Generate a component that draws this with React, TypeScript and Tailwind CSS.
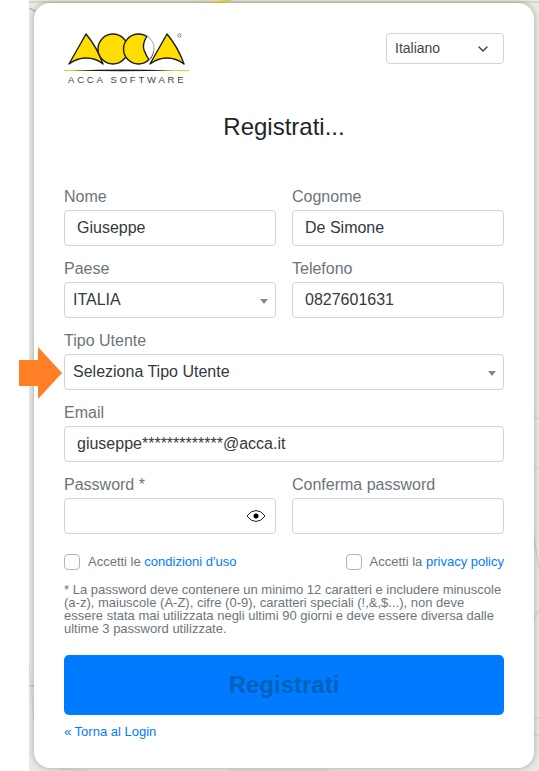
import type { ReactNode } from 'react'
import { ChevronDown } from 'lucide-react'

const inputCls =
  'h-9 w-full rounded-[4px] border border-[#ced4da] bg-white px-3 text-[16px] leading-[34px] text-[#333a40]'
const labelCls = 'mb-1 h-5 text-[16px] leading-[22px] text-[#6c757d]'

function Field({ label, value, className }: { label: string; value?: string; className?: string }) {
  return (
    <div className={className}>
      <div className={labelCls}>{label}</div>
      <div className={inputCls}>{value}</div>
    </div>
  )
}

function SelectField({ label, value }: { label: string; value: string }) {
  return (
    <div>
      <div className={labelCls}>{label}</div>
      <div className="flex h-9 w-full items-center justify-between rounded-[4px] border border-[#ced4da] bg-white pl-2 pr-[7px] text-[16px] text-[#333a40]">
        <span>{value}</span>
        <span className="mt-[2px] h-0 w-0 border-x-[4px] border-t-[5px] border-x-transparent border-t-[#888]" />
      </div>
    </div>
  )
}

function Logo() {
  return (
    <div className="flex w-[126px] flex-col">
      <svg width="126" height="42" viewBox="0 0 126 42" className="block">
        <g fill="#ffdd00" stroke="#1d1a12" strokeWidth="1.4" strokeLinejoin="round">
          <path d="M22 1 L5 31 Q13 25 22 25 Q32 25 39 31 Q33 14 22 1 Z" />
          <path d="M103 1 L86 31 Q94 25 103 25 Q112 25 120 31 Q114 14 103 1 Z" />
          <circle cx="49" cy="16" r="15" />
          <circle cx="74.5" cy="16" r="15" />
        </g>
        <path d="M83 3 Q78 11 80 17 Q82 22 85 27 Q90 21 90 15 Q90 8 83 3 Z" fill="#fff" />
        <path d="M83 3 Q78 11 80 17 Q82 22 85 27" fill="none" stroke="#1d1a12" strokeWidth="1.4" />
        <path d="M83 3 Q90 8 90 15 Q90 21 85 27" fill="none" stroke="#999" strokeWidth="0.7" />
        <circle cx="115.5" cy="2.5" r="1.6" fill="none" stroke="#777" strokeWidth="0.9" />
        <rect x="0" y="37" width="125" height="1" fill="#e6cc20" />
        <path d="M8 37.5 Q58 35.5 109 37.5 Q58 39 8 37.5 Z" fill="#1a1a1a" />
      </svg>
      <div className="mt-[-1px] whitespace-nowrap pl-[4px] text-[9.5px] leading-[12px] tracking-[2.8px] text-[#444]">
        ACCA SOFTWARE
      </div>
    </div>
  )
}

function Check({ children }: { children: ReactNode }) {
  return (
    <div className="flex items-center gap-2 text-[13px] text-[#6c757d]">
      <span className="h-4 w-4 rounded-[4px] border border-[#adb5bd] bg-white" />
      <span>{children}</span>
    </div>
  )
}

// faint map roads showing behind the card
function MapLines() {
  return (
    <svg width="510" height="771" viewBox="0 0 510 771" fill="none" className="absolute left-[29px] top-0">
      <path d="M0 2 H510" stroke="#d8d6c4" strokeWidth="2" />
      <path d="M165 4 Q190 3 202 0" stroke="#ecd84a" strokeWidth="2" />
      <path d="M0 8 L6 11" stroke="#999" strokeWidth="1" />
      <path d="M0 686 H5" stroke="#bbb" strokeWidth="1" />
      <path d="M0 665 L5 720" stroke="#dcdccb" strokeWidth="1" />
      <path d="M504 415 L510 420 M504 465 L510 470 M504 530 L510 570 M504 620 L510 610 M504 718 H510 M504 735 H510" stroke="#cfcfc4" strokeWidth="1" />
      <path d="M30 769 L60 771 M200 770 H300" stroke="#d6d6ca" strokeWidth="1" />
    </svg>
  )
}

export default function App() {
  return (
    <div className="relative h-[771px] w-[539px] overflow-hidden bg-white font-['Liberation_Sans',Arial,sans-serif]">
      <div className="ml-[29px] h-full bg-[#e9e9e4] pl-[5px] pt-[3px]">
        <MapLines />
        <div className="relative h-[765px] w-[500px] rounded-[16px] bg-white px-[30px] pt-[30px] shadow-[0_0_6px_rgba(0,0,0,0.3)]">
          <div className="flex items-start justify-between">
            <Logo />
            <div className="flex h-[31px] w-[118px] items-center justify-between rounded-[4px] border border-[#ced4da] pl-2 pr-[12px] text-[14px] text-[#3f474e]">
              <span>Italiano</span>
              <ChevronDown size={16} strokeWidth={2} className="text-[#343a40]" />
            </div>
          </div>
          <h1 className="mt-[23px] text-center text-[24px] leading-[36px] text-[#212529]">Registrati...</h1>

          <div className="mt-[41px] flex flex-col gap-3">
            <div className="grid grid-cols-2 gap-4">
              <Field label="Nome" value="Giuseppe" />
              <Field label="Cognome" value="De Simone" />
            </div>
            <div className="grid grid-cols-2 gap-4">
              <SelectField label="Paese" value="ITALIA" />
              <Field label="Telefono" value="0827601631" />
            </div>
            <SelectField label="Tipo Utente" value="Seleziona Tipo Utente" />
            <Field label="Email" value="giuseppe*************@acca.it" />
            <div className="grid grid-cols-2 gap-4">
              <div>
                <div className={labelCls}>Password *</div>
                <div className={inputCls + ' flex items-center justify-end pr-[9px]'}>
                  <svg width="20" height="14" viewBox="0 0 20 14" fill="none">
                    <path d="M1 7 Q5 1.5 10 1.5 Q15 1.5 19 7 Q15 12.5 10 12.5 Q5 12.5 1 7 Z" stroke="#222" strokeWidth="1" />
                    <circle cx="10" cy="7" r="2.5" fill="#000" />
                  </svg>
                </div>
              </div>
              <Field label="Conferma password" />
            </div>
          </div>

          <div className="mt-[18px] flex items-center justify-between">
            <Check>
              Accetti le <span className="text-[#007bff]">condizioni d'uso</span>
            </Check>
            <Check>
              Accetti la <span className="text-[#007bff]">privacy policy</span>
            </Check>
          </div>

          <p className="mt-[11px] text-[13px] leading-[13px] text-[#6c757d]">
            * La password deve contenere un minimo 12 caratteri e includere minuscole (a-z), maiuscole (A-Z), cifre (0-9), caratteri speciali (!,&,$...), non deve essere stata mai utilizzata negli ultimi 90 giorni e deve essere diversa dalle ultime 3 password utilizzate.
          </p>

          <div className="mt-[20px] flex h-[60px] items-center justify-center rounded-[5px] bg-[#007bff] text-[24px] font-bold text-[#0062b8]">
            Registrati
          </div>
          <div className="mt-[7px] text-[13px] text-[#007bff]">« Torna al Login</div>
        </div>
      </div>
      <svg width="43" height="52" viewBox="0 0 43 52" className="absolute left-[19px] top-[347px]">
        <path d="M19 0 L43 26 L19 52 L19 39 L0 39 L0 13 L19 13 Z" fill="#ff7f27" />
      </svg>
    </div>
  )
}
